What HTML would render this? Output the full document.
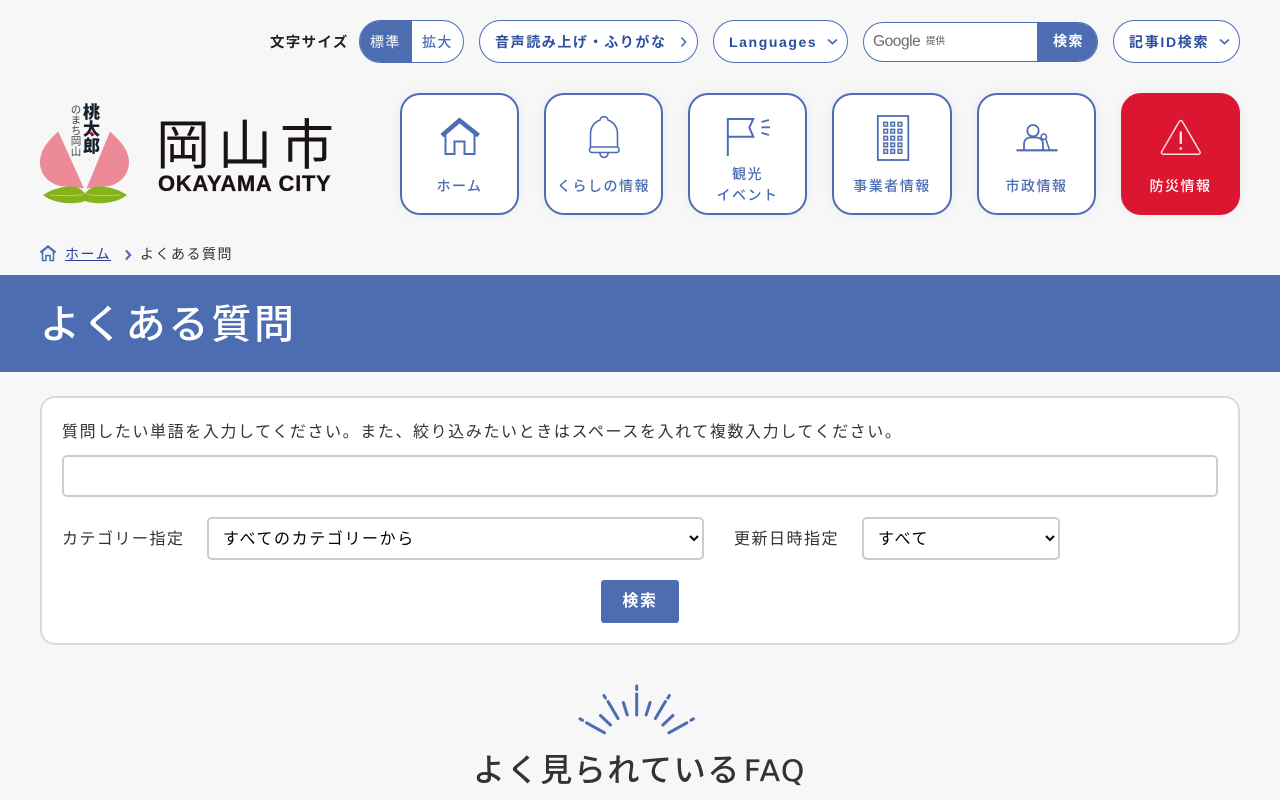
<!DOCTYPE html>
<html lang="ja">
<head>
<meta charset="utf-8">
<title>よくある質問</title>
<style>
*{box-sizing:border-box}
html,body{margin:0;padding:0}
body{width:1280px;height:800px;overflow:hidden;background:#f7f7f7;position:relative;font-family:"Liberation Sans","Noto Sans CJK JP",sans-serif;color:#333}
.a{position:absolute;white-space:nowrap}
.pill{position:absolute;top:20px;height:43px;border:1px solid #4d6db3;border-radius:22px;background:#fff;color:#2b4f9e;font-weight:700;font-size:14px;letter-spacing:1.6px;line-height:42px}
.pill span{position:absolute;top:0;white-space:nowrap}
.pill svg{position:absolute;top:0}
.nav{position:absolute;top:93px;height:122px;border:2px solid #4d6db3;border-radius:20px;background:#fff;box-shadow:0 0 12px rgba(77,109,179,.08)}
.lb{position:absolute;white-space:nowrap;text-align:center;font-size:14px;letter-spacing:1.5px;font-weight:500;color:#4d6db3;line-height:21px;font-family:"Noto Sans CJK JP",sans-serif}
select{position:absolute;font-family:"Liberation Sans","Noto Sans CJK JP",sans-serif;font-size:16px;letter-spacing:1.6px;color:#000;background:#fff;border:2px solid #ccc;border-radius:5px;padding:2px 0 0 10px;height:43px;top:517px}
</style>
</head>
<body>

<!-- top bar -->
<div class="a" style="left:270px;top:33px;font-size:14.4px;font-weight:700;letter-spacing:1.44px;line-height:21px;color:#222">文字サイズ</div>
<div class="pill" style="left:359px;width:105px;overflow:hidden;font-weight:400;letter-spacing:1.4px">
  <div style="position:absolute;left:0;top:0;width:52px;height:41px;background:#4d6db3"></div>
  <span style="left:10px;color:#fff">標準</span>
  <span style="left:62px;color:#4d6db3;font-weight:500">拡大</span>
</div>
<div class="pill" style="left:479px;width:219px">
  <span style="left:15px">音声読み上げ・ふりがな</span>
  <svg style="left:198px" width="12" height="41" viewBox="0 0 12 41"><path d="M3.500 16.500l4 4.500-4 4.500" fill="none" stroke="#4d6db3" stroke-width="1.600"/></svg>
</div>
<div class="pill" style="left:713px;width:135px">
  <span style="left:15px;letter-spacing:1.6px">Languages</span>
  <svg style="left:111px" width="14" height="41" viewBox="0 0 14 41"><path d="M3 18.500l4.500 4 4.500-4" fill="none" stroke="#4d6db3" stroke-width="1.800"/></svg>
</div>
<div class="a" style="left:863px;top:22px;width:235px;height:40px;border:1px solid #4d6db3;border-radius:20px;background:#fff;overflow:hidden">
  <div class="a" style="left:9px;top:9px;font-size:15.500px;line-height:20px;color:#6b6b6b;letter-spacing:-.45px">Google</div>
  <div class="a" style="left:62px;top:12px;font-size:9.500px;line-height:13px;color:#555">提供</div>
  <div class="a" style="left:173px;top:-1px;width:63px;height:41px;background:#4d6db3;color:#fff;font-weight:700;font-size:14px;letter-spacing:1.4px;line-height:39px;text-align:center">検索</div>
</div>
<div class="pill" style="left:1113px;width:127px">
  <span style="left:15px;letter-spacing:1.7px">記事ID検索</span>
  <svg style="left:103px" width="14" height="41" viewBox="0 0 14 41"><path d="M3 18.500l4.500 4 4.500-4" fill="none" stroke="#4d6db3" stroke-width="1.800"/></svg>
</div>

<!-- logo -->
<svg class="a" style="left:0;top:90px" width="140" height="120" viewBox="0 90 140 120">
  <path d="M58.300 131.500C50 139 40 149 40 162c0 12 8 21 20 24l24 2.500L58.300 131.500z" fill="#ec8a98"/>
  <path d="M110 131.500C118 139 129 149 129 162c0 12-8 21-20 24l-22.500 2.500L110 131.500z" fill="#ec8a98"/>
  <path d="M43 195c7-5 19-9 29-8.500 6 .5 11 3.500 13 7.500v7c-11 4-31 3-42-6z" fill="#86b21a"/>
  <path d="M127 195c-7-5-19-9-29-8.500-6 .5-11 3.500-13 7.500v7c11 4 31 3 42-6z" fill="#86b21a"/>
  <path d="M50 195c12 1 24 1 33 -.5M120 195c-12 1-24 1-33 -.5" fill="none" stroke="#c3da7c" stroke-width=".8"/>
</svg>
<div class="a" style="left:68.500px;top:104px;width:12px;font-size:10.500px;line-height:10.500px;color:#444;writing-mode:vertical-rl;letter-spacing:0">のまち岡山</div>
<div class="a" style="left:83px;top:103px;width:17px;font-size:17px;line-height:17.500px;font-weight:900;color:#14202a;writing-mode:vertical-rl;font-family:'Noto Sans CJK JP',sans-serif">桃太郎</div>
<div class="a" style="left:89.500px;top:131.500px;width:3.500px;height:3.500px;border-radius:50%;background:#e60012"></div>
<div class="a" style="left:156px;top:99px;font-size:54px;line-height:84px;letter-spacing:8px;color:#1a1311;font-family:'Noto Sans CJK JP',sans-serif;font-weight:400">岡山市</div>
<div class="a" style="left:158px;top:172px;font-size:22px;line-height:24px;font-weight:700;letter-spacing:.7px;color:#1a1311;-webkit-text-stroke:.3px #1a1311">OKAYAMA CITY</div>

<!-- nav -->
<div class="nav" style="left:400px;width:119px"></div>
<div class="nav" style="left:544px;width:119px"></div>
<div class="nav" style="left:688px;width:119px"></div>
<div class="nav" style="left:832px;width:120px"></div>
<div class="nav" style="left:977px;width:119px"></div>
<div class="nav" style="left:1121px;width:119px;background:#dc1631;border-color:#dc1631"></div>

<svg class="a" style="left:0;top:0" width="1280" height="220" viewBox="0 0 1280 220" fill="none" stroke="#4d6db3" stroke-width="1.500">
  <!-- home -->
  <path d="M442 135.500l17.500-15 19 15" stroke-width="4.600"/>
  <path d="M445.500 134v20h9v-12.500h10V154h10v-20" stroke-width="2"/>
  <!-- bell -->
  <path d="M590.500 147v-13c0-7 4-12 9.500-14 0-1 1-3.300 4-3.300s4 2.300 4 3.300c5.500 2 9.500 7 9.500 14v13" stroke-width="1.600"/>
  <rect x="589.500" y="147" width="29.500" height="5.500" rx="2.500" stroke-width="1.600"/>
  <path d="M600 153c0 6 8 6 8 0" stroke-width="1.600"/>
  <!-- flag -->
  <path d="M727.800 156V119h25.500l-4 8.500 4 9.200h-25.500" stroke-width="2"/>
  <path d="M761.500 122l7.500-2M761.500 127.300h8.500M761.500 132.800l7.500 2.200" stroke-width="1.800"/>
  <!-- building -->
  <rect x="877.800" y="116" width="30.500" height="44" stroke-width="1.800"/>
  <g stroke-width="1.400" fill="#d5deef">
    <rect x="883.800" y="122.300" width="3.800" height="3.800"/><rect x="890.800" y="122.300" width="3.800" height="3.800"/><rect x="898" y="122.300" width="3.800" height="3.800"/>
    <rect x="883.800" y="129.300" width="3.800" height="3.800"/><rect x="890.800" y="129.300" width="3.800" height="3.800"/><rect x="898" y="129.300" width="3.800" height="3.800"/>
    <rect x="883.800" y="136.300" width="3.800" height="3.800"/><rect x="890.800" y="136.300" width="3.800" height="3.800"/><rect x="898" y="136.300" width="3.800" height="3.800"/>
    <rect x="883.800" y="143" width="3.800" height="3.800"/><rect x="890.800" y="143" width="3.800" height="3.800"/><rect x="898" y="143" width="3.800" height="3.800"/>
    <rect x="883.800" y="149.500" width="3.800" height="3.800"/><rect x="890.800" y="149.500" width="3.800" height="3.800"/><rect x="898" y="149.500" width="3.800" height="3.800"/>
  </g>
  <!-- official -->
  <circle cx="1033" cy="130.700" r="5.700" stroke-width="1.800"/>
  <path d="M1024 150v-6c0-4 3-6.500 6-6.500h6c4 0 7 2.500 7 6.500v6" stroke-width="1.800"/>
  <circle cx="1043.800" cy="136.800" r="2.700" stroke-width="1.600"/>
  <path d="M1046 139.500l3.500 10.500" stroke-width="1.600"/>
  <path d="M1016.500 150.300h41" stroke-width="2.200"/>
  <!-- warning -->
  <path d="M1180.800 120.500c.7 0 1.200.4 1.600 1.100l17.500 30c.7 1.300-.1 2.700-1.500 2.700h-35.200c-1.400 0-2.200-1.400-1.500-2.700l17.500-30c.4-.7.900-1.100 1.600-1.100z" stroke="#f8dde1" stroke-width="1.500"/>
  <path d="M1180.800 131.500v12.500" stroke="#f8dde1" stroke-width="2.400"/>
  <circle cx="1180.800" cy="148.500" r="1.400" fill="#f8dde1" stroke="none"/>
</svg>

<div class="lb" style="left:400px;width:119px;top:176px">ホーム</div>
<div class="lb" style="left:544px;width:119px;top:176px">くらしの情報</div>
<div class="lb" style="left:688px;width:119px;top:164px">観光<br>イベント</div>
<div class="lb" style="left:832px;width:120px;top:176px">事業者情報</div>
<div class="lb" style="left:977px;width:119px;top:176px">市政情報</div>
<div class="lb" style="left:1121px;width:119px;top:176px;color:#fff">防災情報</div>

<!-- breadcrumb -->
<svg class="a" style="left:39px;top:245px" width="18" height="17" viewBox="0 0 18 17" fill="none" stroke="#4d6db3">
  <path d="M1.500 7.500L9 1.500l7.500 6" stroke-width="2.400"/>
  <path d="M3.500 6.500V15.500h3.500v-5h4v5h3.500V6.500" stroke-width="1.500"/>
</svg>
<div class="a" style="left:65px;top:244px;font-size:14px;line-height:21px;letter-spacing:1.500px;color:#2a3f9d;text-decoration:underline">ホーム</div>
<svg class="a" style="left:124px;top:249px" width="10" height="12" viewBox="0 0 10 12"><path d="M2 1.500l4.200 4.500L2 10.500" fill="none" stroke="#4d6db3" stroke-width="2.200"/></svg>
<div class="a" style="left:140px;top:244px;font-size:14px;line-height:21px;letter-spacing:1.500px;color:#333">よくある質問</div>

<!-- heading band -->
<div class="a" style="left:0;top:275px;width:1280px;height:97px;background:#4d6db3"></div>
<div class="a" style="left:40px;top:291px;font-size:40px;line-height:60px;letter-spacing:2.800px;font-weight:500;color:#fff;font-family:'Noto Sans CJK JP',sans-serif">よくある質問</div>

<!-- form card -->
<div class="a" style="left:40px;top:396px;width:1200px;height:249px;background:#fff;border:2px solid #d0dbe8;border-radius:15px"></div>
<div class="a" style="left:62px;top:421px;font-size:16px;line-height:24px;letter-spacing:1.600px;color:#333">質問したい単語を入力してください。また、絞り込みたいときはスペースを入れて複数入力してください。</div>
<div class="a" style="left:62px;top:455px;width:1156px;height:42px;background:#fff;border:2px solid #ccc;border-radius:5px"></div>
<div class="a" style="left:62px;top:528px;font-size:16px;line-height:24px;letter-spacing:1.500px;color:#333">カテゴリー指定</div>
<select style="left:207px;width:497px"><option>すべてのカテゴリーから</option></select>
<div class="a" style="left:734px;top:528px;font-size:16px;line-height:24px;letter-spacing:1.500px;color:#333">更新日時指定</div>
<select style="left:862px;width:198px"><option>すべて</option></select>
<div class="a" style="left:601px;top:580px;width:78px;height:43px;background:#4d6db3;border-radius:3px;color:#fff;font-size:16px;font-weight:700;letter-spacing:1.600px;line-height:44px;text-align:center">検索</div>

<!-- sunburst -->
<svg class="a" style="left:570px;top:680px" width="134" height="60" viewBox="570 680 134 60" fill="none" stroke="#4d6db3" stroke-width="3" stroke-linecap="round">
  <path d="M636.700 686v3.500M636.700 694v21"/>
  <path d="M623.300 702.500l4 12.500M650.100 702.500l-4 12.500"/>
  <path d="M604 695.500l1.500 2.500M608 701.500l10 17M669.400 695.500l-1.500 2.500M665.400 701.500l-10 17"/>
  <path d="M600.500 715.500l10 9.500M672.900 715.500l-10 9.500"/>
  <path d="M580 718.800l2.500 1.500M586.500 722.800l18 10M693.400 718.800l-2.500 1.500M686.900 722.800l-18 10"/>
</svg>
<div class="a" style="left:473px;top:744px;font-size:32px;line-height:48px;letter-spacing:1.600px;font-weight:500;color:#333;font-family:'Noto Sans CJK JP',sans-serif">よく見られている<span style="font-family:'DejaVu Sans',sans-serif;font-size:29.500px;letter-spacing:1.600px;margin-left:3px;font-weight:400;-webkit-text-stroke:.3px #333">FAQ</span></div>

</body>
</html>
